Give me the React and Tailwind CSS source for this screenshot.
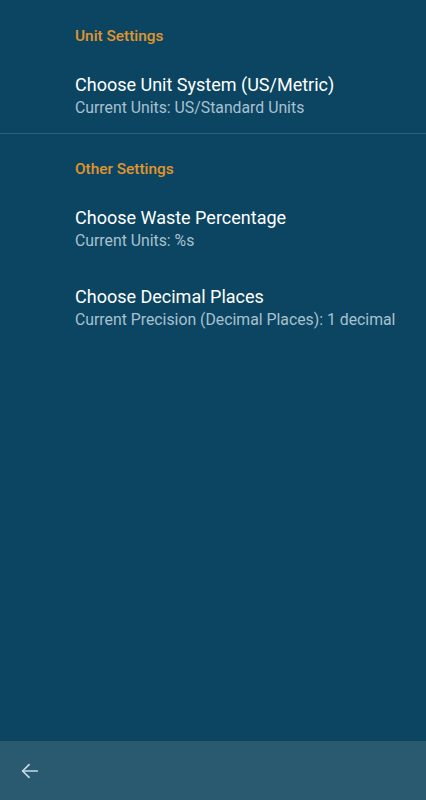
import React from "react";

function Header({ children, top }) {
  return (
    <div className={`pl-[75px] ${top} text-[15.4px] leading-[20px] font-medium text-[#e0952c]`}>
      {children}
    </div>
  );
}

function Item({ title, sub, top }) {
  return (
    <div className={`pl-[75px] ${top}`}>
      <div className="text-[18px] leading-[22px] text-white">{title}</div>
      <div className="mt-[2px] text-[15.8px] leading-[20px] text-[#a7c1d1]">{sub}</div>
    </div>
  );
}

export default function App() {
  return (
    <div
      className="w-[426px] h-[800px] flex flex-col bg-[#0c4561]"
      style={{ fontFamily: "Roboto, 'Noto Sans', sans-serif" }}
    >
      <div className="flex-1">
        <Header top="pt-[26px]">Unit Settings</Header>
        <Item top="pt-[28px]" title="Choose Unit System (US/Metric)" sub="Current Units: US/Standard Units" />
        <div className="mt-[15px] h-px bg-[#2c5f78]" />
        <Header top="pt-[25px]">Other Settings</Header>
        <Item top="pt-[28px]" title="Choose Waste Percentage" sub="Current Units: %s" />
        <Item top="pt-[35px]" title="Choose Decimal Places" sub="Current Precision (Decimal Places): 1 decimal" />
      </div>
      <div className="h-[59px] bg-[#2a5a70] flex items-center pl-[19px]">
        <svg width="22" height="22" viewBox="0 0 24 24" fill="none" stroke="#c6dce8" strokeWidth="1.8" strokeLinecap="round" strokeLinejoin="round">
          <path d="M20 12H4" />
          <path d="M11 5l-7 7 7 7" />
        </svg>
      </div>
    </div>
  );
}
